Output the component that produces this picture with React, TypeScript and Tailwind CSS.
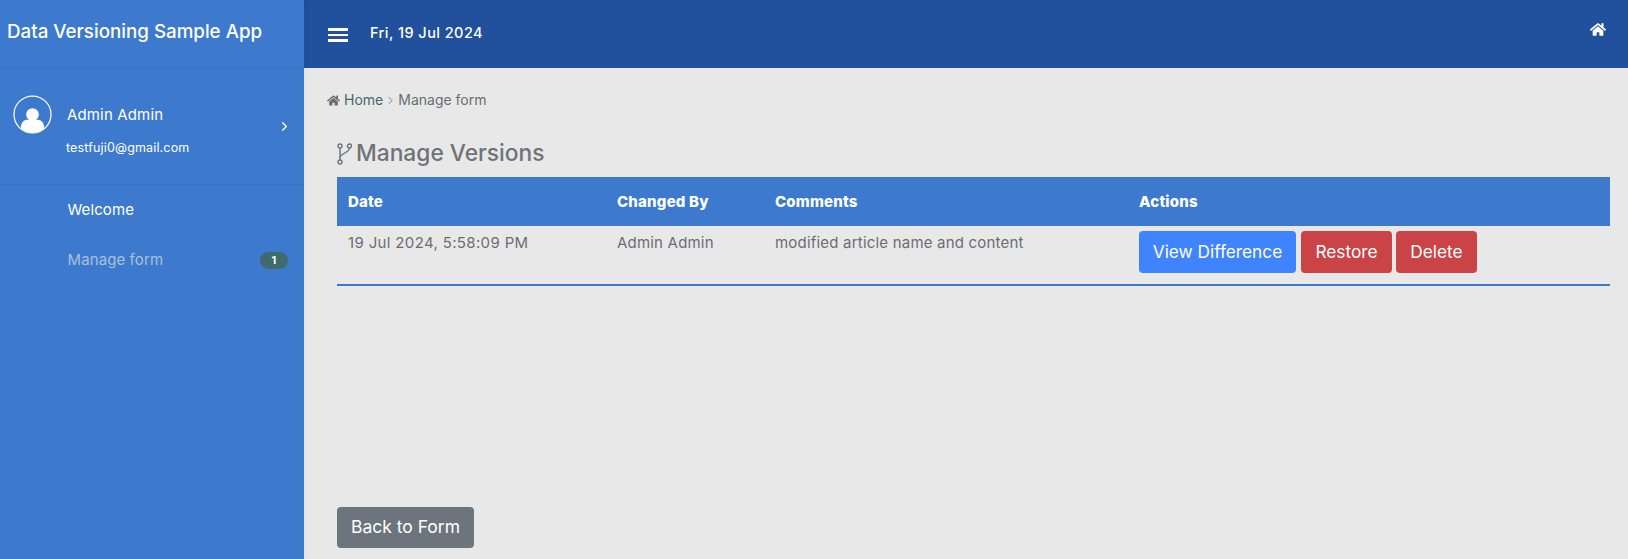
import { ChevronRight } from 'lucide-react';
import { FaHome } from 'react-icons/fa';

function Avatar() {
  return (
    <svg viewBox="0 0 38 38" className="h-[39px] w-[39px] shrink-0">
      <circle cx="19" cy="19" r="18" fill="none" stroke="white" strokeWidth="1.2" />
      <circle cx="19" cy="19" r="6.2" fill="white" />
      <path d="M7.5 33 C7.5 26 11 24 14 24 L24 24 C27 24 30.5 26 30.5 33 C27 35.5 23 37 19 37 C15 37 11 35.5 7.5 33 Z" fill="white" />
    </svg>
  );
}

function BranchIcon() {
  return (
    <svg viewBox="0 0 15 22" className="h-[22px] w-[15px] shrink-0" fill="none" stroke="currentColor" strokeWidth="1.4">
      <circle cx="3" cy="3" r="2" />
      <circle cx="3" cy="19" r="2" />
      <circle cx="12.5" cy="3" r="2" />
      <path d="M3 5 V17" />
      <path d="M12.5 5 C12.5 10 3 10 3 15" />
    </svg>
  );
}

function Sidebar() {
  return (
    <aside className="relative z-10 flex w-[304px] shrink-0 flex-col bg-[#3d79cd] text-white shadow-[2px_0_6px_rgba(0,0,0,0.03)]">
      <div className="flex h-[68px] items-center border-b border-[#3a71c0] pb-[3px] pl-[7px] text-[18.75px] font-medium leading-none">
        Data Versioning Sample App
      </div>
      <div className="relative flex h-[117px] border-b border-[#3a71c0] pl-[13px] pt-[27px]">
        <Avatar />
        <div className="ml-[15px] pt-[10px]">
          <div className="text-[15px] leading-[20px] tracking-[0.15px]">Admin Admin</div>
          <div className="mt-[15px] -ml-[1px] text-[12.5px] leading-[16px] tracking-[0.15px]">testfuji0@gmail.com</div>
        </div>
        <ChevronRight className="absolute right-[12px] top-[51px] h-[15px] w-[15px]" strokeWidth={2} />
      </div>
      <nav className="pl-[67.5px] pr-[16px] text-[15px] tracking-[0.1px]">
        <div className="mt-[15px] leading-[20px]">Welcome</div>
        <div className="mt-[30px] flex items-center justify-between leading-[20px] text-[#a9c1d6]">
          <span>Manage form</span>
          <span className="flex h-[17px] w-[28px] items-center justify-center rounded-full bg-[#3f6a6e] text-[11px] font-bold text-white">
            1
          </span>
        </div>
      </nav>
    </aside>
  );
}

function Header() {
  return (
    <header className="flex h-[68px] shrink-0 items-start bg-[#21509c] text-white">
      <div className="mt-[28px] ml-[24px] flex w-[20px] flex-col gap-[3px]">
        <span className="h-[2.5px] bg-white" />
        <span className="h-[2.5px] bg-white" />
        <span className="h-[2.5px] bg-white" />
      </div>
      <div className="ml-[22px] mt-[23px] text-[14.5px] font-medium leading-[20px] tracking-[0.45px]">Fri, 19 Jul 2024</div>
      <FaHome className="ml-auto mr-[22px] mt-[22px] h-[15px] w-[16px]" />
    </header>
  );
}

function VersionsTable() {
  return (
    <table className="w-[1273px] table-fixed border-b-2 border-[#3d79cd] text-[15px] tracking-[0.2px] text-[#6a6e72]">
      <thead>
        <tr className="h-[49px] bg-[#3d79cd] text-left text-white">
          <th className="w-[269px] pl-[11px] pt-[2px] font-extrabold">Date</th>
          <th className="w-[158px] pl-[11px] pt-[2px] font-extrabold">Changed By</th>
          <th className="w-[363px] pl-[11px] pt-[2px] font-extrabold">Comments</th>
          <th className="pl-[12px] pt-[2px] font-extrabold">Actions</th>
        </tr>
      </thead>
      <tbody>
        <tr>
          <td className="pl-[11px] pt-[7px] pb-[11px] align-top leading-[20px] tracking-[0.35px]">19 Jul 2024, 5:58:09 PM</td>
          <td className="pl-[11px] pt-[7px] pb-[11px] align-top leading-[20px]">Admin Admin</td>
          <td className="pl-[11px] pt-[7px] pb-[11px] align-top leading-[20px]">modified article name and content</td>
          <td className="pl-[12px] pt-[5px] pb-[11px] align-top">
            <div className="flex">
              <button className="h-[42px] w-[157px] rounded bg-[#3f84fc] text-[17.25px] tracking-normal text-white">View Difference</button>
              <button className="ml-[5px] h-[42px] w-[91px] rounded bg-[#c94347] text-[17.25px] tracking-normal text-white">Restore</button>
              <button className="ml-[4px] h-[42px] w-[81px] rounded bg-[#c94347] text-[17.25px] tracking-normal text-white">Delete</button>
            </div>
          </td>
        </tr>
      </tbody>
    </table>
  );
}

export default function App() {
  return (
    <div className="flex h-[559px] w-[1628px] overflow-hidden bg-[#e8e8e8] font-['Inter',sans-serif]">
      <Sidebar />
      <main className="flex min-w-0 flex-1 flex-col">
        <Header />
        <div className="flex flex-1 flex-col pl-[33px] pb-[11px]">
          <div className="-ml-[10px] mt-[22px] flex items-center text-[14px] leading-[20px] text-[#6a6e72]">
            <FaHome className="mr-[4px] h-[13px] w-[13px]" />
            <span className="text-[#3f6a6e]">Home</span>
            <ChevronRight className="mx-[1px] h-[13px] w-[13px]" strokeWidth={1.5} />
            <span>Manage form</span>
          </div>
          <h1 className="mt-[27px] flex h-[33px] items-center text-[22.75px] font-medium leading-none text-[#6f7377]">
            <BranchIcon />
            <span className="ml-[4px]">Manage Versions</span>
          </h1>
          <div className="mt-[7px]">
            <VersionsTable />
          </div>
          <button className="mt-auto h-[41px] w-[137px] rounded bg-[#6c757d] text-[17.5px] text-white">Back to Form</button>
        </div>
      </main>
    </div>
  );
}
